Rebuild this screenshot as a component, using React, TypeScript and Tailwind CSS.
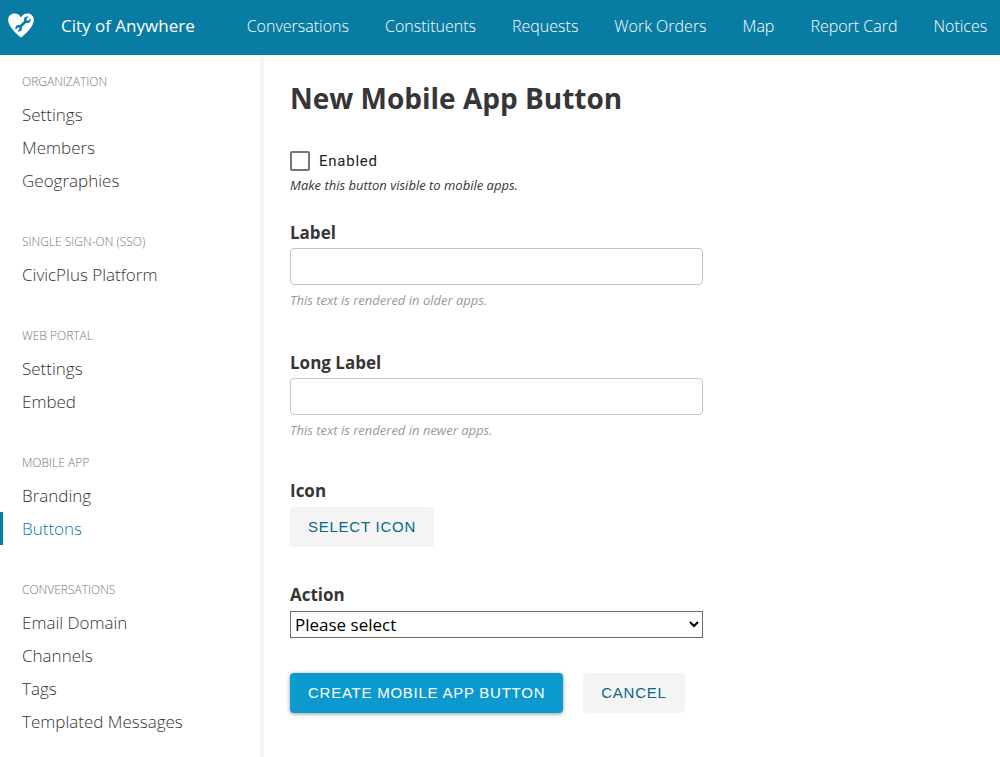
const navLinks = ['Conversations', 'Constituents', 'Requests', 'Work Orders', 'Map', 'Report Card', 'Notices'];

const sections = [
  { title: 'Organization', items: ['Settings', 'Members', 'Geographies'] },
  { title: 'Single Sign-On (SSO)', items: ['CivicPlus Platform'] },
  { title: 'Web Portal', items: ['Settings', 'Embed'] },
  { title: 'Mobile App', items: ['Branding', 'Buttons'] },
  { title: 'Conversations', items: ['Email Domain', 'Channels', 'Tags', 'Templated Messages'] },
];

function Logo() {
  return (
    <svg viewBox="0 0 26 25" className="h-[25px] w-[26px]" aria-hidden="true">
      <path
        fill="#fff"
        d="M13 24.5C11.8 23.8 7.5 20.2 4.6 16.6C1.8 13.2.2 10 .2 6.8C.2 3.2 3 .5 6.4.5C9.3.5 11.6 2.1 13 4.4C14.4 2.1 16.7.5 19.6.5C23 .5 25.8 3.2 25.8 6.8C25.8 10 24.2 13.2 21.4 16.6C18.5 20.2 14.2 23.8 13 24.5Z"
      />
      <path d="M11.7 14.3L18.3 7.7" stroke="#097ca4" strokeWidth="2.8" />
      <circle cx="19.3" cy="6.8" r="3.3" fill="#097ca4" />
      <circle cx="10.7" cy="15.3" r="3.3" fill="#097ca4" />
      <path d="M19 7.1L22.4 3.7M11 15L7.6 18.4" stroke="#fff" strokeWidth="2.4" />
    </svg>
  );
}

function TextField({ id, label, hint }: { id: string; label: string; hint: string }) {
  return (
    <div className="flex flex-col">
      <label htmlFor={id} className="text-[17px] leading-6 font-bold">
        {label}
      </label>
      <input
        id={id}
        type="text"
        className="mt-[3px] h-[37px] w-full rounded-[4px] border border-[#c4c4d0] bg-white px-2 text-base"
      />
      <p className="mt-[5px] text-[13px] leading-5 text-[#999] italic">{hint}</p>
    </div>
  );
}

export default function App() {
  return (
    <div className="flex min-h-screen flex-col bg-white font-['Open_Sans','Noto_Sans',sans-serif] text-[#363636]">
      <header className="flex h-[55px] shrink-0 items-center bg-[#097ca4] pb-1 pl-2 whitespace-nowrap text-white">
        <a href="#" aria-label="Home" className="shrink-0">
          <Logo />
        </a>
        <a href="#" className="ml-[27px] shrink-0 text-[17px] leading-6">
          City of Anywhere
        </a>
        <nav className="ml-[52px] flex gap-9 text-base leading-6 font-light">
          {navLinks.map((link) => (
            <a key={link} href="#">
              {link}
            </a>
          ))}
        </nav>
      </header>

      <div className="flex flex-1">
        <aside className="flex w-[264px] shrink-0 flex-col gap-7 border-r-4 border-[#f4f4f4] pt-[10px]">
          {sections.map((section) => (
            <section key={section.title}>
              <h2 className="pl-[22px] text-xs leading-[33px] font-light text-[#777] uppercase">{section.title}</h2>
              <ul>
                {section.items.map((item) => (
                  <li key={item}>
                    <a
                      href="#"
                      aria-current={item === 'Buttons' ? 'page' : undefined}
                      className={
                        item === 'Buttons'
                          ? 'block border-l-3 border-[#097ca4] pl-[19px] text-[17px] leading-[33px] font-light text-[#097ca4]'
                          : 'block border-l-3 border-transparent pl-[19px] text-[17px] leading-[33px] font-light text-[#333]'
                      }
                    >
                      {item}
                    </a>
                  </li>
                ))}
              </ul>
            </section>
          ))}
        </aside>

        <main className="flex-1 px-[26px] pt-[23px]">
          <h1 className="text-[28px] leading-10 font-bold">New Mobile App Button</h1>
          <form className="mt-[33px] w-full max-w-[413px]">
            <label className="flex h-5 items-center gap-[9px] font-[Roboto,'Liberation_Sans',sans-serif] text-[15px] leading-5 tracking-wider text-[#222]">
              <input
                type="checkbox"
                className="h-5 w-5 appearance-none rounded-[2px] border-2 border-[#757575] bg-white checked:bg-[#097ca4]"
              />
              Enabled
            </label>
            <p className="mt-1 text-[13px] leading-5 italic">Make this button visible to mobile apps.</p>

            <div className="mt-[26px] flex flex-col gap-[41px]">
              <TextField id="label" label="Label" hint="This text is rendered in older apps." />
              <TextField id="long-label" label="Long Label" hint="This text is rendered in newer apps." />
            </div>

            <div className="mt-[39px]">
              <h2 className="text-[17px] leading-6 font-bold">Icon</h2>
              <button
                type="button"
                className="mt-1 h-10 rounded-[4px] bg-[#f4f4f4] px-[18px] font-['Liberation_Sans',Arial,sans-serif] text-[15px] tracking-wider text-[#0b6784] uppercase"
              >
                Select Icon
              </button>
            </div>

            <div className="mt-9 flex flex-col">
              <label htmlFor="action" className="text-[17px] leading-6 font-bold">
                Action
              </label>
              <select
                id="action"
                className="mt-1 h-[27px] w-full border border-[#6b6b6b] bg-white text-[17px] leading-6 text-black"
              >
                <option>Please select</option>
              </select>
            </div>

            <div className="mt-[35px] mb-11 flex gap-5 font-['Liberation_Sans',Arial,sans-serif] text-[15px] whitespace-nowrap uppercase">
              <button
                type="submit"
                className="h-10 rounded-[4px] bg-[#0b99ce] px-[18px] font-medium tracking-wider text-white uppercase shadow-[0_1px_4px_rgba(0,0,0,0.4)]"
              >
                Create Mobile App Button
              </button>
              <button type="button" className="h-10 rounded-[4px] bg-[#f4f4f4] px-[18px] tracking-wider text-[#0b6784] uppercase">
                Cancel
              </button>
            </div>
          </form>
        </main>
      </div>
    </div>
  );
}
